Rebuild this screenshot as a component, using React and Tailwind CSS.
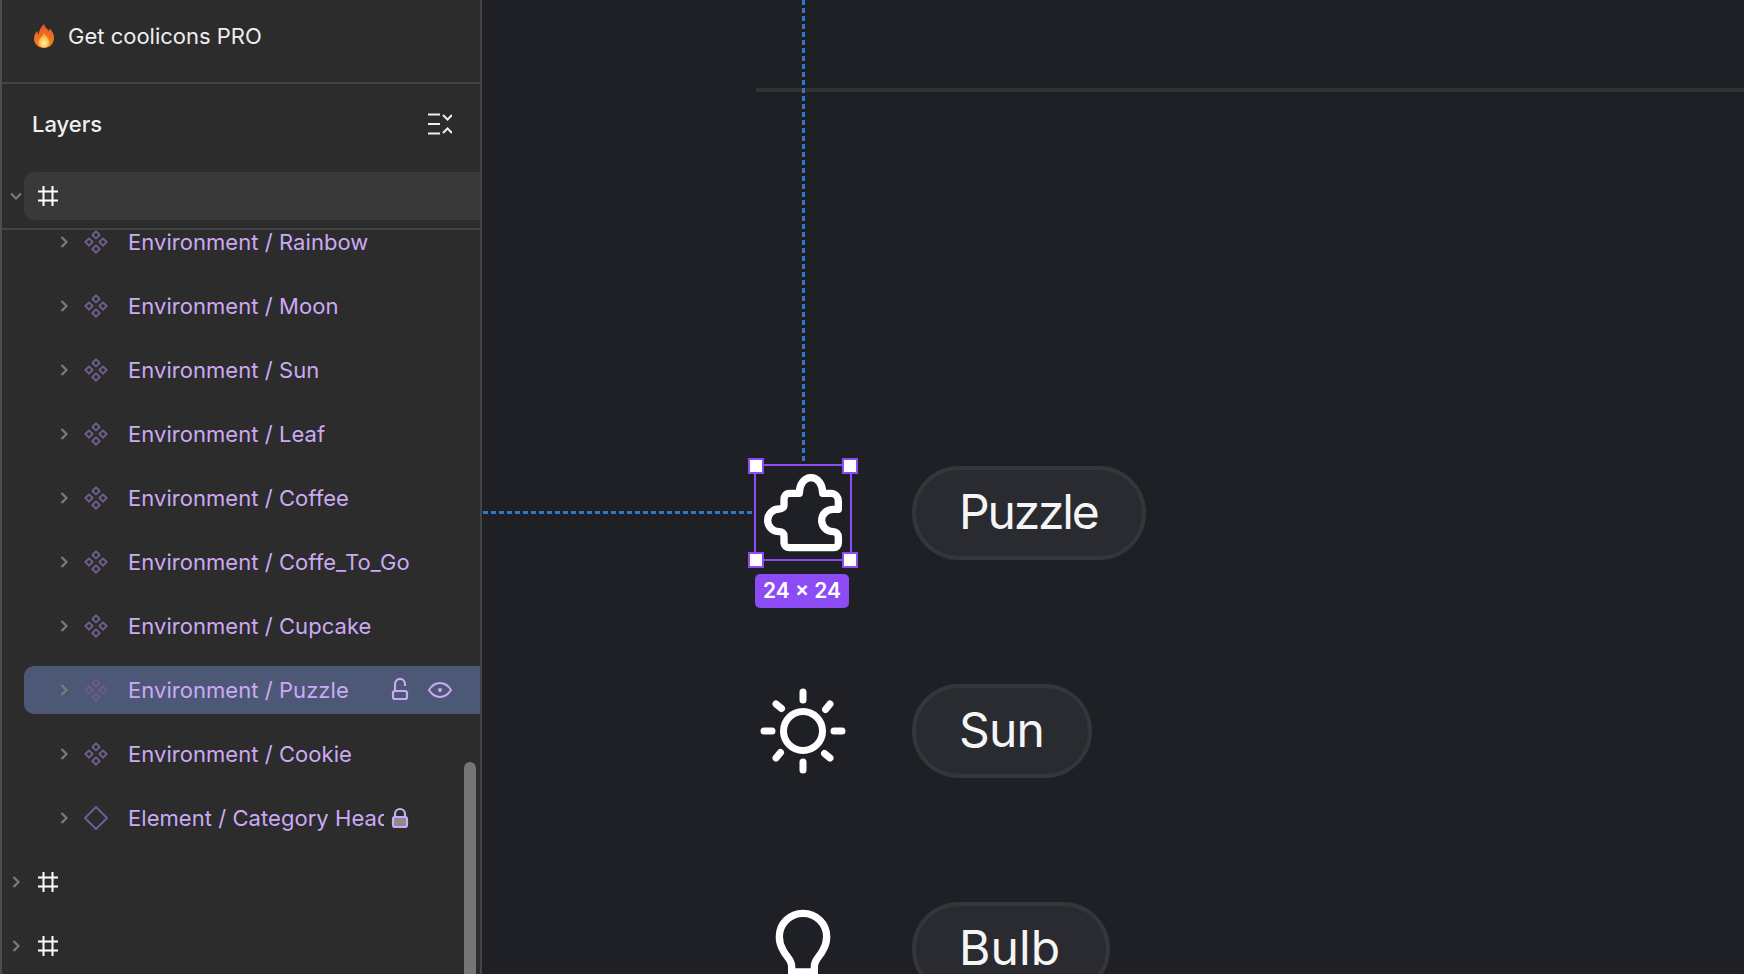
import React from 'react';

const environmentRows = ['Rainbow', 'Moon', 'Sun', 'Leaf', 'Coffee', 'Coffe_To_Go', 'Cupcake'];

function Chevron({ open = false }) {
  return (
    <svg className="w-4 h-4 shrink-0 text-[#7a7a7a]" viewBox="0 0 16 16" fill="none" stroke="currentColor" strokeWidth="2.2">
      <path d={open ? 'M3 5.500l5 5 5-5' : 'M5.500 3l5 5-5 5'} />
    </svg>
  );
}

function FrameIcon() {
  return (
    <svg className="w-5 h-5 shrink-0 text-white" viewBox="0 0 20 20" fill="none" stroke="currentColor" strokeWidth="2">
      <path d="M5.500 0v20M14.500 0v20M0 5.500h20M0 14.500h20" />
    </svg>
  );
}

function ComponentIcon() {
  return (
    <svg className="w-6 h-6 shrink-0 text-[#705c94]" viewBox="0 0 24 24" fill="none" stroke="currentColor" strokeWidth="2">
      <path d="M12 1.400l3.600 3.600-3.600 3.600-3.600-3.600zM12 15.400l3.600 3.600-3.600 3.600-3.600-3.600zM5 8.400l3.600 3.600-3.600 3.600-3.600-3.600zM19 8.400l3.600 3.600-3.600 3.600-3.600-3.600z" strokeLinejoin="round" />
    </svg>
  );
}

function DiamondIcon() {
  return (
    <svg className="w-6 h-6 shrink-0 text-[#705c94]" viewBox="0 0 24 24" fill="none" stroke="currentColor" strokeWidth="2">
      <path d="M12 1l11 11-11 11L1 12z" strokeLinejoin="round" />
    </svg>
  );
}

function LockIcon({ closed = false }) {
  return (
    <svg className="w-6 h-6 shrink-0 text-[#cbaaf5]" viewBox="0 0 24 24" fill="none" stroke="currentColor" strokeWidth="2.2">
      {closed ? (
        <>
          <rect x="5" y="11" width="14" height="10" rx="2" fill="#8a8a8a" />
          <path d="M7 11V8a5 5 0 0 1 10 0v3" />
        </>
      ) : (
        <>
          <rect x="5" y="13" width="14" height="8" rx="2" />
          <path d="M7 13V6a5 5 0 0 1 10 0v2" />
        </>
      )}
    </svg>
  );
}

function EyeIcon() {
  return (
    <svg className="w-6 h-6 shrink-0 text-[#cbaaf5]" viewBox="0 0 24 24" fill="none" stroke="currentColor" strokeWidth="2">
      <path d="M1 12c2.600-4.200 6.200-7 11-7s8.400 2.800 11 7c-2.600 4.200-6.200 7-11 7s-8.400-2.800-11-7z" />
      <circle cx="12" cy="12" r="2" fill="currentColor" stroke="none" />
    </svg>
  );
}

function CollapseIcon() {
  return (
    <svg className="w-6 h-6 text-[#eeeeee]" viewBox="0 0 24 24" fill="none" stroke="currentColor" strokeWidth="2">
      <path d="M0 2.500h12M0 12h12M0 21.500h12" />
      <path d="M15 3l4.500 4.500L24 3M15 21l4.500-4.500L24 21" />
    </svg>
  );
}

function Flame() {
  return (
    <svg className="w-5 h-6 shrink-0" viewBox="0 0 20 24">
      <defs>
        <linearGradient id="flameOuter" x1="0" y1="0" x2="0" y2="1">
          <stop offset="0" stopColor="#e8542a" />
          <stop offset="1" stopColor="#f2861f" />
        </linearGradient>
        <radialGradient id="flameInner" cx="0.5" cy="0.7" r="0.6">
          <stop offset="0" stopColor="#fff2a8" />
          <stop offset="1" stopColor="#f9a51f" />
        </radialGradient>
      </defs>
      <path d="M10 0c1 3.500 3 4.500 5 7 .500-1 .700-1.700.800-2.600C18.400 7 20 10 20 14c0 6-4.500 10-10 10S0 20 0 14.500C0 11 1.700 8.500 3.500 7c0 1.500.300 2.500 1.200 3.300C5 6.500 7 3 10 0z" fill="url(#flameOuter)" />
      <path d="M10 9c.600 2.200 5.500 5 5.500 9.500 0 3-2.600 5-5.500 5s-5.500-2-5.500-5c0-4 4.500-6 5.500-9.500z" fill="url(#flameInner)" />
    </svg>
  );
}

function LayerRow({ label, icon, selected = false, locked = false, closedLock = false, visible = false }) {
  return (
    <div className={`flex items-center h-12 ml-[22px] pl-8 rounded-l-[10px] ${selected ? 'bg-[#4c5875]' : ''}`}>
      <Chevron />
      <div className={`ml-3 ${selected ? 'opacity-90' : ''}`}>{icon}</div>
      <div className={`ml-5 whitespace-nowrap text-[22px] tracking-[0.05px] text-[#cbaaf5] ${locked ? 'w-[256px] overflow-hidden' : ''}`}>{label}</div>
      {locked && <div className="ml-1"><LockIcon closed={closedLock} /></div>}
      {visible && <div className="ml-4"><EyeIcon /></div>}
    </div>
  );
}

function FrameRow({ open = false }) {
  return (
    <div className="flex items-center h-12 pl-[6px]">
      <Chevron open={open} />
      <div className={`flex items-center flex-1 h-12 pl-[14px] rounded-l-[10px] ${open ? 'bg-[#393939]' : ''}`}>
        <FrameIcon />
      </div>
    </div>
  );
}

function Sidebar() {
  return (
    <aside className="relative flex flex-col shrink-0 w-[482px] h-full bg-[#2c2c2c] border-l-2 border-r-2 border-l-[#4d4d4d] border-r-[#444444] overflow-hidden">
      <div className="flex items-center gap-[14px] h-[84px] pb-[10px] pl-8 border-b-2 border-[#444444]">
        <Flame />
        <span className="text-[22px] text-[#eeeeee]">Get coolicons PRO</span>
      </div>
      <div className="flex items-center justify-between h-[80px] pl-[30px] pr-[28px]">
        <span className="text-[22px] font-medium text-[#f0f0f0]">Layers</span>
        <CollapseIcon />
      </div>
      <div className="mt-2 pb-2 border-b-2 border-[#444444]">
        <FrameRow open />
      </div>
      <div className="flex-1 overflow-hidden">
        <div className="flex flex-col gap-4 -mt-[12px]">
          {environmentRows.map((name) => (
            <LayerRow key={name} label={`Environment / ${name}`} icon={<ComponentIcon />} />
          ))}
          <LayerRow label="Environment / Puzzle" icon={<ComponentIcon />} selected locked visible />
          <LayerRow label="Environment / Cookie" icon={<ComponentIcon />} />
          <LayerRow label="Element / Category Header" icon={<DiamondIcon />} locked closedLock />
          <FrameRow />
          <FrameRow />
        </div>
      </div>
      {/* overlay scrollbar */}
      <div className="absolute left-[462px] top-[762px] bottom-0 w-3 rounded-t-full bg-[#757575]" />
    </aside>
  );
}

function PuzzleIcon() {
  return (
    <svg className="w-24 h-24" viewBox="75 75 288 288" fill="none" stroke="#ffffff" strokeWidth="22" strokeLinejoin="round">
      <path d="M208 160h-30c-10 0-16 8-16 18v17c0 8-6 12-14 12-20 0-35 15-35 34s15 34 35 34c8 0 14 5 14 13v20c0 9 7 15 16 15h133c9 0 14-6 14-15v-17c0-9-6-16-15-16-20 0-35-15-35-34s15-33 35-33h15v-25c0-12-9-23-22-23h-25c0-28-15-47-35-47s-35 19-35 47z" />
    </svg>
  );
}

function SunIcon() {
  return (
    <svg className="w-24 h-24" viewBox="-48 -48 96 96" fill="none" stroke="#ffffff" strokeWidth="7" strokeLinecap="round">
      <circle cx="0" cy="0" r="19.500" />
      <path d="M0-39v8M0 31v8M-39 0h8M31 0h8M-27-27l5.500 4.500M27 27l-5.500-4.500M27-27l-4.500 5.500M-27 27l4.500-5.500" />
    </svg>
  );
}

function BulbIcon() {
  return (
    <svg className="w-24 h-24" viewBox="46 693 288 288" fill="none" stroke="#ffffff" strokeWidth="22">
      <path d="M156 950V890C156 868 140 862 130 840C122 826 119 815 119 800A71 70 0 0 1 261 800C261 815 258 826 250 840C240 862 224 868 224 890V950M156 906H224" />
    </svg>
  );
}

function Handle({ className }) {
  return <div className={`absolute w-4 h-4 bg-white border-2 border-[#8b4cf6] ${className}`} />;
}

function IconRow({ icon, name, pill, selected = false }) {
  return (
    <div className="flex items-center h-[94px]">
      <div className="relative w-24 h-24 shrink-0">
        {icon}
        {selected && (
          <>
            <div className="absolute -left-px -right-px -top-px bottom-0 border-2 border-[#8b4cf6]" />
            <Handle className="-left-[7px] -top-[7px]" />
            <Handle className="-right-[7px] -top-[7px]" />
            <Handle className="-left-[7px] -bottom-[7px]" />
            <Handle className="-right-[7px] -bottom-[7px]" />
            <div className="absolute left-0 top-[109px] flex items-center justify-center w-[94px] h-[34px] rounded-[5px] bg-[#8b4cf6] text-[21px] font-semibold text-white">
              24 × 24
            </div>
          </>
        )}
      </div>
      <div className={`flex items-center h-[94px] pb-[2px] ml-[61px] rounded-full border-4 border-[#34363b] bg-[#2a2b30] text-[48px] text-[#f5f5f5] ${pill}`}>
        {name}
      </div>
    </div>
  );
}

function Canvas() {
  return (
    <main className="relative flex-1 h-full overflow-hidden bg-[#1f2025]">
      <div className="ml-[274px] mt-[88px] h-1 bg-[#303135]" />
      <div className="flex flex-col gap-[124px] ml-[273px] mt-[374px]">
        <IconRow icon={<PuzzleIcon />} name="Puzzle" pill="pl-[43px] pr-[45px] tracking-[-2.2px]" selected />
        <IconRow icon={<SunIcon />} name="Sun" pill="pl-[43px] pr-[44px] tracking-[-0.8px]" />
        <IconRow icon={<BulbIcon />} name="Bulb" pill="pl-[43px] pr-[46px] tracking-[0.1px]" />
      </div>
      {/* measure guides */}
      <div className="absolute left-[320px] top-0 w-[3px] h-[462px] bg-[repeating-linear-gradient(180deg,#2f78c8_0_5px,transparent_5px_8px)]" />
      <div className="absolute left-[1px] top-[511px] w-[270px] h-[3px] bg-[repeating-linear-gradient(90deg,#2f78c8_0_5px,transparent_5px_8px)]" />
    </main>
  );
}

export default function App() {
  return (
    <div className="flex w-full h-screen overflow-hidden" style={{ fontFamily: 'Inter, sans-serif' }}>
      <Sidebar />
      <Canvas />
    </div>
  );
}
